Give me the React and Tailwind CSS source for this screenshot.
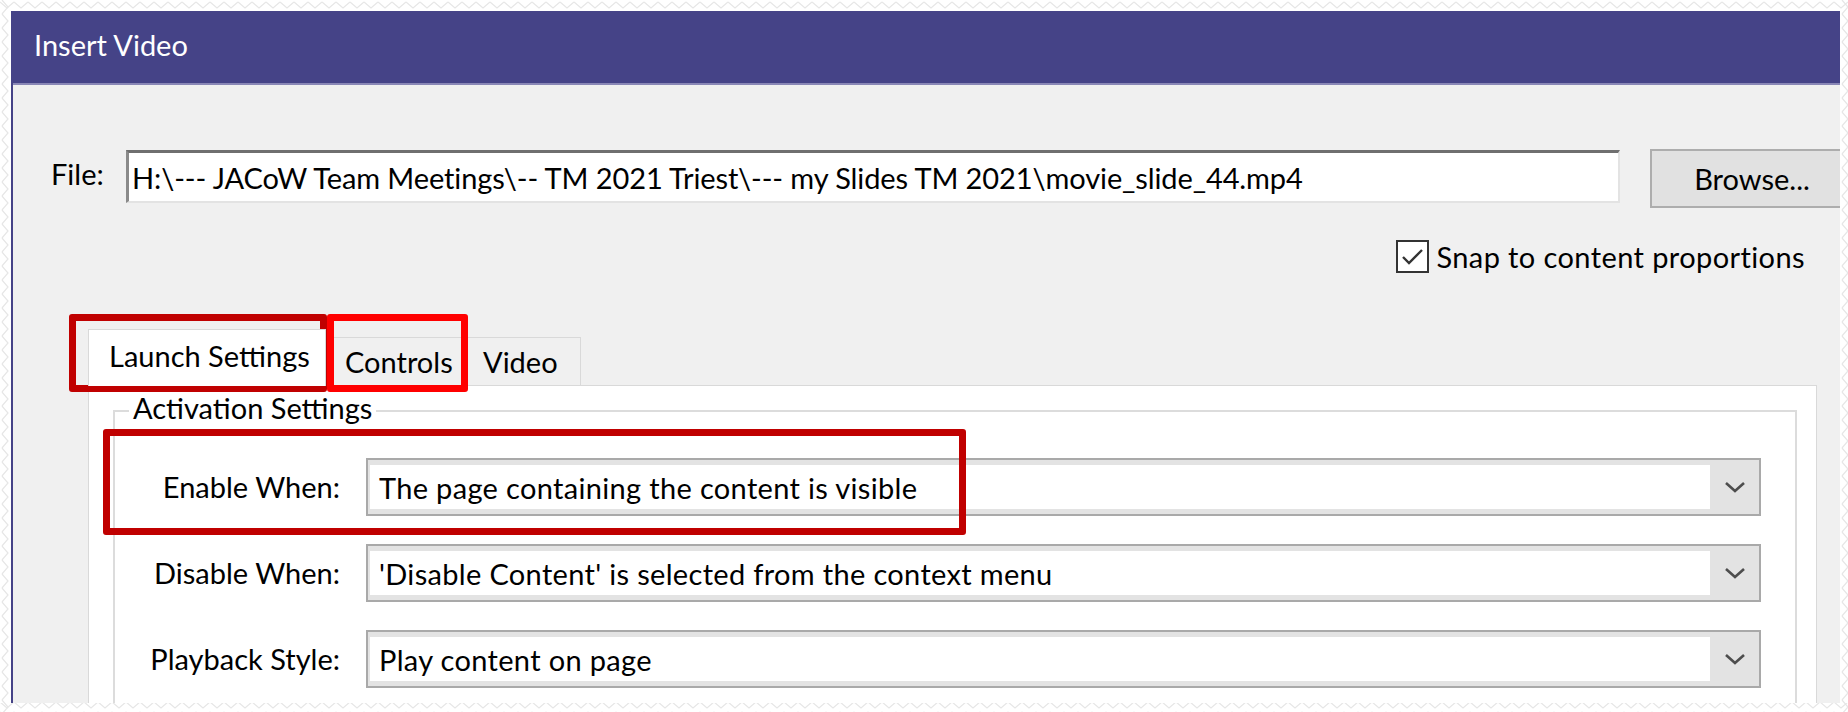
import React from 'react';

const Chevron = () => (
  <svg width="22" height="12" viewBox="0 0 22 12" fill="none">
    <polyline points="2,2 11,10 20,2" stroke="#4d4d4d" strokeWidth="2.6" />
  </svg>
);

const TornEdges = () => (
  <svg className="pointer-events-none absolute inset-0" width="1848" height="712">
    <defs>
      <pattern id="zigH" width="14" height="10" patternUnits="userSpaceOnUse">
        <polyline points="0,2 7,8 14,2" fill="none" stroke="#e6e6e6" strokeWidth="1.2" />
      </pattern>
      <pattern id="zigV" width="10" height="14" patternUnits="userSpaceOnUse">
        <polyline points="2,0 8,7 2,14" fill="none" stroke="#e6e6e6" strokeWidth="1.2" />
      </pattern>
    </defs>
    <rect x="0" y="0" width="1848" height="10" fill="url(#zigH)" />
    <rect x="0" y="703" width="1848" height="9" fill="url(#zigH)" />
    <rect x="0" y="0" width="10" height="712" fill="url(#zigV)" />
    <rect x="1840" y="0" width="8" height="712" fill="url(#zigV)" />
  </svg>
);

const SelectRow = ({ label, value }) => (
  <div className="flex items-center">
    <div className="w-[225px] shrink-0 text-right">{label}</div>
    <div className="ml-[26px] flex h-[58px] w-[1395px] shrink-0 border-2 border-[#a9a9a9] bg-[#e3e3e3]">
      <div className="my-[5px] ml-[2px] flex flex-1 items-center bg-white pl-[9px] leading-none tracking-[0.33px]">{value}</div>
      <div className="flex w-[49px] items-center justify-center">
        <Chevron />
      </div>
    </div>
  </div>
);

export default function App() {
  return (
    <div className="relative h-[712px] w-[1848px] overflow-hidden bg-white font-[Lato,'Noto_Sans',sans-serif] text-[29px] text-black">
      <TornEdges />
      <div className="absolute left-[11px] top-[11px] h-[692px] w-[1829px] overflow-hidden border-l-2 border-[#454387] bg-[#f0f0f0]">
        {/* title bar */}
        <div className="flex h-[74px] items-center border-b-2 border-[#8987b6] bg-[#454387] pl-[21px] pb-[4px] text-white">
          Insert Video
        </div>

        {/* file row */}
        <div className="mt-[64px] flex items-start pl-[38px]">
          <div className="mt-[10px] w-[75px] shrink-0 leading-none">File:</div>
          <div className="mt-[1px] flex h-[53px] w-[1494px] shrink-0 items-center whitespace-nowrap border-b-2 border-l-[3px] border-r-2 border-t-[3px] border-b-[#e3e3e3] border-l-[#8a8a8a] border-r-[#e3e3e3] border-t-[#6f6f6f] bg-white pl-[3px] leading-none tracking-[-0.1px]">
            H:\--- JACoW Team Meetings\-- TM 2021 Triest\--- my Slides TM 2021\movie_slide_44.mp4
          </div>
          <div className="ml-[30px] flex h-[59px] w-[204px] shrink-0 items-center justify-center border-2 border-[#adadad] bg-[#e1e1e1] leading-none">
            Browse...
          </div>
        </div>

        {/* snap checkbox */}
        <div className="mt-[32px] flex items-center justify-end pr-[35px]">
          <div className="flex h-[33px] w-[33px] items-center justify-center border-2 border-[#333333] bg-white">
            <svg width="25" height="20" viewBox="0 0 25 20" fill="none">
              <polyline points="3,10 9,16 22,3" stroke="#333333" strokeWidth="2.4" />
            </svg>
          </div>
          <div className="ml-[7px] leading-none tracking-[0.4px]">Snap to content proportions</div>
        </div>

        {/* tabs */}
        <div className="mt-[56px] flex items-end pl-[75px]">
          <div className="relative z-10 -mb-px flex h-[57px] w-[238px] items-center border-x border-t border-[#d9d9d9] bg-white pb-[6px] pl-[20px] leading-none">
            Launch Settings
          </div>
          <div className="flex h-[48px] w-[140px] items-center border-r border-t border-[#d9d9d9] pl-[19px] leading-none">
            Controls
          </div>
          <div className="flex h-[48px] w-[115px] items-center border-r border-t border-[#d9d9d9] pl-[17px] leading-none">
            Video
          </div>
        </div>

        {/* panel */}
        <div className="ml-[75px] mr-[23px] h-[400px] border border-[#d9d9d9] bg-white pl-[24px] pr-[19px] pt-[24px]">
          <div className="relative h-[400px] border-2 border-[#dcdcdc] pt-[46px]">
            <div className="absolute left-[14px] top-[-19px] bg-white px-[4px] leading-none">Activation Settings</div>
            <div className="flex flex-col gap-[28px]">
              <SelectRow label="Enable When:" value="The page containing the content is visible" />
              <SelectRow label="Disable When:" value="'Disable Content' is selected from the context menu" />
              <SelectRow label="Playback Style:" value="Play content on page" />
            </div>
          </div>
        </div>
      </div>

      {/* red annotation boxes */}
      <div className="absolute left-[69px] top-[314px] h-[78px] w-[258px] rounded-[3px] border-[7px] border-[#c00000]" />
      <div className="absolute left-[327px] top-[314px] h-[78px] w-[141px] rounded-[3px] border-[7px] border-[#ff0000]" />
      <div className="absolute left-[103px] top-[429px] h-[106px] w-[863px] rounded-[3px] border-[7px] border-[#c00000]" />
    </div>
  );
}
